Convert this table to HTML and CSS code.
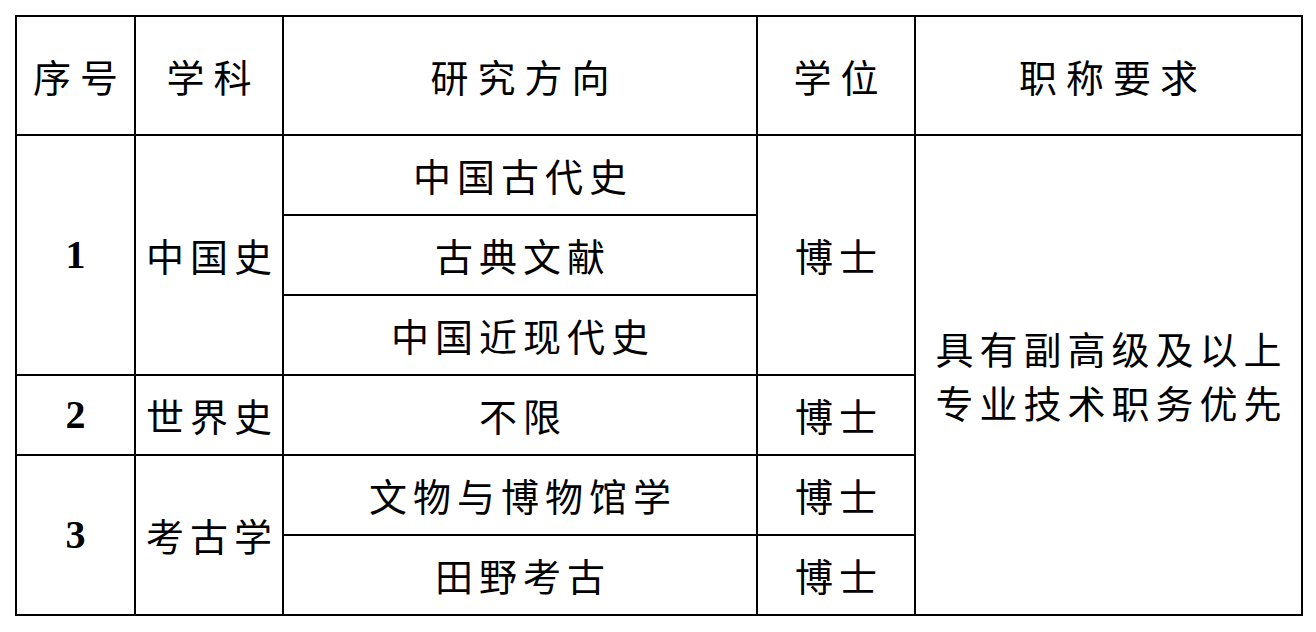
FILE: index.html
```html
<!DOCTYPE html>
<html lang="zh">
<head>
<meta charset="utf-8">
<title>招聘岗位</title>
<link rel="stylesheet" href="styles.css">
</head>
<body>
<table class="grid">
  <colgroup>
    <col class="c1"><col class="c2"><col class="c3"><col class="c4"><col class="c5">
  </colgroup>
  <thead>
    <tr class="head">
      <th>序号</th>
      <th>学科</th>
      <th>研究方向</th>
      <th>学位</th>
      <th>职称要求</th>
    </tr>
  </thead>
  <tbody>
    <tr>
      <td class="num" rowspan="3">1</td>
      <td rowspan="3">中国史</td>
      <td>中国古代史</td>
      <td rowspan="3">博士</td>
      <td class="req" rowspan="7">具有副高级及以上<br>专业技术职务优先</td>
    </tr>
    <tr><td>古典文献</td></tr>
    <tr><td>中国近现代史</td></tr>
    <tr>
      <td class="num">2</td>
      <td>世界史</td>
      <td>不限</td>
      <td>博士</td>
    </tr>
    <tr>
      <td class="num" rowspan="2">3</td>
      <td rowspan="2">考古学</td>
      <td>文物与博物馆学</td>
      <td>博士</td>
    </tr>
    <tr>
      <td>田野考古</td>
      <td>博士</td>
    </tr>
  </tbody>
</table>
</body>
</html>
```

FILE: styles.css
```css
html, body {
  margin: 0;
  padding: 0;
  background: #fff;
}

body {
  padding: 15px 0 0 15px;
  font-family: "Noto Sans CJK SC", "Noto Sans", sans-serif;
  color: #000;
}

.grid {
  border-collapse: collapse;
  table-layout: fixed;
  width: 1286px;
}

.c1 { width: 119px; }
.c2 { width: 148px; }
.c3 { width: 474px; }
.c4 { width: 158px; }
.c5 { width: 387px; }

.grid th,
.grid td {
  border: 2px solid #000;
  padding: 0 0 0 6px;
  text-align: center;
  vertical-align: middle;
  font-size: 38px;
  line-height: 54px;
  letter-spacing: 6px;
  font-weight: 400;
  white-space: nowrap;
}

.grid tbody tr {
  height: 80px;
}

.grid .head {
  height: 119px;
}

.grid .head th {
  letter-spacing: 9px;
  padding-left: 9px;
  font-weight: 400;
}

.grid td.num {
  font-family: "Liberation Serif", "Times New Roman", serif;
  font-size: 40px;
  font-weight: 700;
  letter-spacing: 0;
  padding-left: 0;
}

.grid td.req {
  line-height: 54px;
}
```
